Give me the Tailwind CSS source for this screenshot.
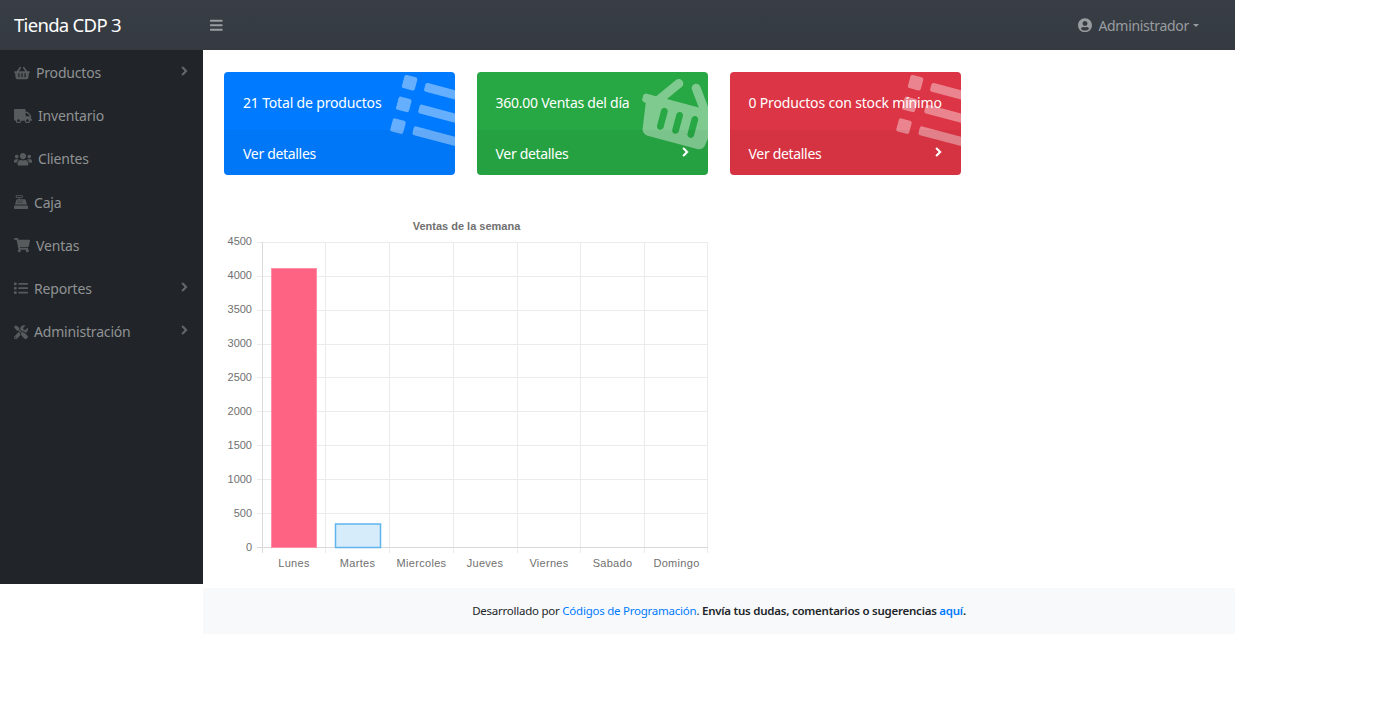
<!DOCTYPE html>
<html lang="es">
<head>
<meta charset="utf-8">
<title>Tienda CDP 3</title>
<script src="https://cdn.jsdelivr.net/npm/@tailwindcss/browser@4"></script>
</head>
<body class="bg-white font-['Noto_Sans',sans-serif] overflow-hidden">
<div class="w-[1235px] h-[705px]">
  <header class="h-[50px] flex items-center bg-gradient-to-b from-[#393e46] to-[#343a40]">
    <div class="w-[203px] pl-[14px] text-[18.5px] tracking-[-0.7px] text-white">Tienda CDP 3</div>
    <svg viewBox="0 0 448 512" class="w-[12.6px] h-[14.4px] ml-[7px] fill-[#999c9f]"><path d="M16 132h416c8.837 0 16-7.163 16-16V76c0-8.837-7.163-16-16-16H16C7.163 60 0 67.163 0 76v40c0 8.837 7.163 16 16 16zm0 160h416c8.837 0 16-7.163 16-16v-40c0-8.837-7.163-16-16-16H16c-8.837 0-16 7.163-16 16v40c0 8.837 7.163 16 16 16zm0 160h416c8.837 0 16-7.163 16-16v-40c0-8.837-7.163-16-16-16H16c-8.837 0-16 7.163-16 16v40c0 8.837 7.163 16 16 16z"/></svg>
    <div class="ml-auto flex items-center mr-[36px] text-[#999c9f] text-[14px] tracking-[-0.3px]">
      <svg viewBox="0 0 496 512" class="w-[14px] h-[14.4px] mr-[6px] fill-[#999c9f]"><path d="M248 8C111 8 0 119 0 256s111 248 248 248 248-111 248-248S385 8 248 8zm0 96c48.6 0 88 39.4 88 88s-39.4 88-88 88-88-39.4-88-88 39.4-88 88-88zm0 344c-58.7 0-111.3-26.6-146.5-68.2 18.8-35.4 55.6-59.8 98.5-59.8 2.4 0 4.8.4 7.1 1.1 13 4.2 26.6 6.9 40.9 6.9 14.3 0 28-2.7 40.9-6.9 2.3-.7 4.7-1.1 7.1-1.1 42.9 0 79.7 24.4 98.5 59.8C359.3 421.4 306.7 448 248 448z"/></svg>
      <span>Administrador</span>
      <span class="ml-[4px] w-0 h-0 border-x-[3.5px] border-x-transparent border-t-[3.5px] border-t-[#999c9f]"></span>
    </div>
  </header>
  <div class="flex items-start">
    <aside class="w-[203px] h-[534px] shrink-0 bg-[#212529] pt-[1px] text-[14px] tracking-[-0.18px] text-[#909294]">
      <a class="h-[43.2px] flex items-center pl-[14px] pr-[14px]">
        <svg viewBox="0 0 576 512" class="w-[16px] h-[14px] mr-[6px] fill-[#585b5e]"><path d="M576 216v16c0 13.255-10.745 24-24 24h-8l-26.113 182.788C514.509 462.435 494.257 480 470.37 480H105.63c-23.887 0-44.139-17.565-47.518-41.212L32 256h-8c-13.255 0-24-10.745-24-24v-16c0-13.255 10.745-24 24-24h67.341l106.78-146.821c10.395-14.292 30.407-17.453 44.701-7.058 14.293 10.395 17.453 30.408 7.058 44.701L170.477 192h235.046L326.12 82.821c-10.395-14.292-7.234-34.306 7.059-44.701 14.291-10.395 34.306-7.235 44.701 7.058L484.659 192H552c13.255 0 24 10.745 24 24zM312 392V280c0-13.255-10.745-24-24-24s-24 10.745-24 24v112c0 13.255 10.745 24 24 24s24-10.745 24-24zm112 0V280c0-13.255-10.745-24-24-24s-24 10.745-24 24v112c0 13.255 10.745 24 24 24s24-10.745 24-24zm-224 0V280c0-13.255-10.745-24-24-24s-24 10.745-24 24v112c0 13.255 10.745 24 24 24s24-10.745 24-24z"/></svg>
        <span>Productos</span>
        <svg viewBox="0 0 320 512" class="ml-auto w-[9px] h-[10px] -mt-[3px] fill-[#63666a] stroke-[#63666a] stroke-[40]"><path d="M285.476 272.971L91.132 467.314c-9.373 9.373-24.569 9.373-33.941 0l-22.667-22.667c-9.357-9.357-9.375-24.522-.04-33.901L188.505 256 34.484 101.255c-9.335-9.379-9.317-24.544.04-33.901l22.667-22.667c9.373-9.373 24.569-9.373 33.941 0L285.475 239.03c9.373 9.372 9.373 24.568.001 33.941z"/></svg>
      </a>
      <a class="h-[43.2px] flex items-center pl-[14px] pr-[14px]">
        <svg viewBox="0 0 640 512" class="w-[18px] h-[14.4px] mr-[6px] fill-[#585b5e]"><path d="M624 352h-16V243.9c0-12.7-5.1-24.9-14.1-33.9L494 110.1c-9-9-21.2-14.1-33.9-14.1H416V48c0-26.5-21.5-48-48-48H48C21.5 0 0 21.5 0 48v320c0 26.5 21.5 48 48 48h16c0 53 43 96 96 96s96-43 96-96h128c0 53 43 96 96 96s96-43 96-96h48c8.8 0 16-7.2 16-16v-32c0-8.8-7.2-16-16-16zM160 464c-26.5 0-48-21.5-48-48s21.5-48 48-48 48 21.5 48 48-21.5 48-48 48zm320 0c-26.5 0-48-21.5-48-48s21.5-48 48-48 48 21.5 48 48-21.5 48-48 48zm80-208H416V144h44.1l99.9 99.9V256z"/></svg>
        <span>Inventario</span>
      </a>
      <a class="h-[43.2px] flex items-center pl-[14px] pr-[14px]">
        <svg viewBox="0 0 640 512" class="w-[18px] h-[14.4px] mr-[6px] fill-[#585b5e]"><path d="M96 224c35.3 0 64-28.7 64-64s-28.7-64-64-64-64 28.7-64 64 28.7 64 64 64zm448 0c35.3 0 64-28.7 64-64s-28.7-64-64-64-64 28.7-64 64 28.7 64 64 64zm32 32h-64c-17.6 0-33.5 7.1-45.1 18.6 40.3 22.1 68.9 62 75.1 109.4h66c17.7 0 32-14.3 32-32v-32c0-35.3-28.7-64-64-64zm-256 0c61.9 0 112-50.1 112-112S381.9 32 320 32 208 82.1 208 144s50.1 112 112 112zm76.8 32h-8.3c-20.8 10-43.9 16-68.5 16s-47.6-6-68.5-16h-8.3C179.6 288 128 339.6 128 403.2V432c0 26.5 21.5 48 48 48h288c26.5 0 48-21.5 48-48v-28.8c0-63.6-51.6-115.2-115.2-115.2zm-223.7-13.4C161.5 263.1 145.6 256 128 256H64c-35.3 0-64 28.7-64 64v32c0 17.7 14.3 32 32 32h65.9c6.3-47.4 34.9-87.3 75.2-109.4z"/></svg>
        <span>Clientes</span>
      </a>
      <a class="h-[43.2px] flex items-center pl-[14px] pr-[14px]">
        <svg viewBox="0 0 512 512" class="w-[14px] h-[14.4px] mr-[6px] fill-[#585b5e]"><path fill-rule="evenodd" d="M80 0h224c9 0 16 7 16 16v64c0 9-7 16-16 16H208v48h176c20 0 36 12 42 30l50 170H36l50-170c5-16 18-27 34-29h56V96H80c-9 0-16-7-16-16V16C64 7 71 0 80 0zm16 32v32h192V32H96zM128 192v32h40v-32h-40zm72 0v32h40v-32h-40zm72 0v32h40v-32h-40zm-144 56v32h40v-32h-40zm72 0v32h40v-32h-40zm72 0v32h40v-32h-40zM32 376h448c18 0 32 14 32 32v72c0 18-14 32-32 32H32c-18 0-32-14-32-32v-72c0-18 14-32 32-32z"/></svg>
        <span>Caja</span>
      </a>
      <a class="h-[43.2px] flex items-center pl-[14px] pr-[14px]">
        <svg viewBox="0 0 576 512" class="w-[16px] h-[14.4px] mr-[6px] fill-[#585b5e]"><path d="M528.12 301.319l47.273-208C578.806 78.301 567.391 64 551.99 64H159.208l-9.166-44.81C147.758 8.021 137.93 0 126.529 0H24C10.745 0 0 10.745 0 24v16c0 13.255 10.745 24 24 24h69.883l70.248 343.435C147.325 417.1 136 435.222 136 456c0 30.928 25.072 56 56 56s56-25.072 56-56c0-15.674-6.447-29.835-16.824-40h209.647C430.447 426.165 424 440.326 424 456c0 30.928 25.072 56 56 56s56-25.072 56-56c0-22.172-12.888-41.332-31.579-50.405l5.517-24.276c3.413-15.018-8.002-29.319-23.403-29.319H218.117l-6.545-32h293.145c11.206 0 20.92-7.754 23.403-18.681z"/></svg>
        <span>Ventas</span>
      </a>
      <a class="h-[43.2px] flex items-center pl-[14px] pr-[14px]">
        <svg viewBox="0 0 512 512" class="w-[14px] h-[14.4px] mr-[6px] fill-[#585b5e]"><path d="M80 368H16a16 16 0 0 0-16 16v64a16 16 0 0 0 16 16h64a16 16 0 0 0 16-16v-64a16 16 0 0 0-16-16zm0-320H16A16 16 0 0 0 0 64v64a16 16 0 0 0 16 16h64a16 16 0 0 0 16-16V64a16 16 0 0 0-16-16zm0 160H16a16 16 0 0 0-16 16v64a16 16 0 0 0 16 16h64a16 16 0 0 0 16-16v-64a16 16 0 0 0-16-16zm416 176H176a16 16 0 0 0-16 16v32a16 16 0 0 0 16 16h320a16 16 0 0 0 16-16v-32a16 16 0 0 0-16-16zm0-320H176a16 16 0 0 0-16 16v32a16 16 0 0 0 16 16h320a16 16 0 0 0 16-16V80a16 16 0 0 0-16-16zm0 160H176a16 16 0 0 0-16 16v32a16 16 0 0 0 16 16h320a16 16 0 0 0 16-16v-32a16 16 0 0 0-16-16z"/></svg>
        <span>Reportes</span>
        <svg viewBox="0 0 320 512" class="ml-auto w-[9px] h-[10px] -mt-[3px] fill-[#63666a] stroke-[#63666a] stroke-[40]"><path d="M285.476 272.971L91.132 467.314c-9.373 9.373-24.569 9.373-33.941 0l-22.667-22.667c-9.357-9.357-9.375-24.522-.04-33.901L188.505 256 34.484 101.255c-9.335-9.379-9.317-24.544.04-33.901l22.667-22.667c9.373-9.373 24.569-9.373 33.941 0L285.475 239.03c9.373 9.372 9.373 24.568.001 33.941z"/></svg>
      </a>
      <a class="h-[43.2px] flex items-center pl-[14px] pr-[14px]">
        <svg viewBox="0 0 512 512" class="w-[14px] h-[14.4px] mr-[6px] fill-[#585b5e]"><path d="M501.1 395.7L384 278.6c-23.1-23.1-57.6-27.6-85.4-13.9L192 158.1V96L64 0 0 64l96 128h62.1l106.6 106.6c-13.6 27.8-9.2 62.3 13.9 85.4l117.1 117.1c14.6 14.6 38.2 14.6 52.7 0l52.7-52.7c14.5-14.6 14.5-38.2-.1-52.7zM331.7 225c28.3 0 54.9 11 74.9 31l19.4 19.4c15.8-6.9 30.8-16.5 43.8-29.5 37.1-37.1 49.7-89.3 37.9-136.7-2.2-9-13.5-12.1-20.1-5.5l-74.4 74.4-67.9-11.3L334 98.9l74.4-74.4c6.6-6.6 3.4-17.9-5.7-20.2-47.4-11.7-99.6.9-136.6 37.9-28.5 28.5-41.9 66.1-41.2 103.6l82.1 82.1c8.1-1.9 16.5-2.9 24.7-2.9zm-103.9 82l-56.7-56.7L18.7 402.8c-25 25-25 65.5 0 90.5s65.5 25 90.5 0l123.6-123.6c-7.6-19.9-9.9-41.6-5-62.7zM64 472c-13.2 0-24-10.8-24-24 0-13.3 10.7-24 24-24s24 10.7 24 24c0 13.2-10.7 24-24 24z"/></svg>
        <span>Administración</span>
        <svg viewBox="0 0 320 512" class="ml-auto w-[9px] h-[10px] -mt-[3px] fill-[#63666a] stroke-[#63666a] stroke-[40]"><path d="M285.476 272.971L91.132 467.314c-9.373 9.373-24.569 9.373-33.941 0l-22.667-22.667c-9.357-9.357-9.375-24.522-.04-33.901L188.505 256 34.484 101.255c-9.335-9.379-9.317-24.544.04-33.901l22.667-22.667c9.373-9.373 24.569-9.373 33.941 0L285.475 239.03c9.373 9.372 9.373 24.568.001 33.941z"/></svg>
      </a>
    </aside>
    <div class="flex-1 flex flex-col">
      <main class="h-[538px] pt-[22px] pl-[21px]">
        <div class="flex gap-[22px] text-[14px] tracking-[-0.17px] text-white">
          <div class="relative w-[231px] h-[103px] rounded-[4px] overflow-hidden bg-[#007bff]">
            <svg viewBox="0 0 512 512" class="absolute left-[172px] top-[3.6px] w-[72px] h-[72px] rotate-[15deg] fill-white/40"><path d="M80 368H16a16 16 0 0 0-16 16v64a16 16 0 0 0 16 16h64a16 16 0 0 0 16-16v-64a16 16 0 0 0-16-16zm0-320H16A16 16 0 0 0 0 64v64a16 16 0 0 0 16 16h64a16 16 0 0 0 16-16V64a16 16 0 0 0-16-16zm0 160H16a16 16 0 0 0-16 16v64a16 16 0 0 0 16 16h64a16 16 0 0 0 16-16v-64a16 16 0 0 0-16-16zm416 176H176a16 16 0 0 0-16 16v32a16 16 0 0 0 16 16h320a16 16 0 0 0 16-16v-32a16 16 0 0 0-16-16zm0-320H176a16 16 0 0 0-16 16v32a16 16 0 0 0 16 16h320a16 16 0 0 0 16-16V80a16 16 0 0 0-16-16zm0 160H176a16 16 0 0 0-16 16v32a16 16 0 0 0 16 16h320a16 16 0 0 0 16-16v-32a16 16 0 0 0-16-16z"/></svg>
            <div class="relative h-[58px] pl-[19px] pt-[20px] leading-[21px]">21 Total de productos</div>
            <div class="relative h-[45px] pl-[19px] pt-[13px] leading-[21px] tracking-[-0.32px] bg-black/3">Ver detalles</div>
          </div>
          <div class="relative w-[231px] h-[103px] rounded-[4px] overflow-hidden bg-[#28a745]">
            <svg viewBox="0 0 576 512" class="absolute left-[163px] top-[4px] w-[81px] h-[72px] rotate-[15deg] fill-white/40"><path d="M576 216v16c0 13.255-10.745 24-24 24h-8l-26.113 182.788C514.509 462.435 494.257 480 470.37 480H105.63c-23.887 0-44.139-17.565-47.518-41.212L32 256h-8c-13.255 0-24-10.745-24-24v-16c0-13.255 10.745-24 24-24h67.341l106.78-146.821c10.395-14.292 30.407-17.453 44.701-7.058 14.293 10.395 17.453 30.408 7.058 44.701L170.477 192h235.046L326.12 82.821c-10.395-14.292-7.234-34.306 7.059-44.701 14.291-10.395 34.306-7.235 44.701 7.058L484.659 192H552c13.255 0 24 10.745 24 24zM312 392V280c0-13.255-10.745-24-24-24s-24 10.745-24 24v112c0 13.255 10.745 24 24 24s24-10.745 24-24zm112 0V280c0-13.255-10.745-24-24-24s-24 10.745-24 24v112c0 13.255 10.745 24 24 24s24-10.745 24-24zm-224 0V280c0-13.255-10.745-24-24-24s-24 10.745-24 24v112c0 13.255 10.745 24 24 24s24-10.745 24-24z"/></svg>
            <div class="relative h-[58px] pl-[18.5px] pt-[20px] leading-[21px] tracking-[-0.25px]">360.00 Ventas del día</div>
            <div class="relative h-[45px] pl-[18.5px] pr-[18px] pt-[13px] leading-[21px] bg-black/3 flex justify-between"><span class="tracking-[-0.32px]">Ver detalles</span><svg viewBox="0 0 320 512" class="w-[9px] h-[10px] mt-[4px] fill-white stroke-white stroke-[40]"><path d="M285.476 272.971L91.132 467.314c-9.373 9.373-24.569 9.373-33.941 0l-22.667-22.667c-9.357-9.357-9.375-24.522-.04-33.901L188.505 256 34.484 101.255c-9.335-9.379-9.317-24.544.04-33.901l22.667-22.667c9.373-9.373 24.569-9.373 33.941 0L285.475 239.03c9.373 9.372 9.373 24.568.001 33.941z"/></svg></div>
          </div>
          <div class="relative w-[231px] h-[103px] rounded-[4px] overflow-hidden bg-[#dc3545]">
            <svg viewBox="0 0 512 512" class="absolute left-[171.5px] top-[3.6px] w-[72px] h-[72px] rotate-[15deg] fill-white/40"><path d="M80 368H16a16 16 0 0 0-16 16v64a16 16 0 0 0 16 16h64a16 16 0 0 0 16-16v-64a16 16 0 0 0-16-16zm0-320H16A16 16 0 0 0 0 64v64a16 16 0 0 0 16 16h64a16 16 0 0 0 16-16V64a16 16 0 0 0-16-16zm0 160H16a16 16 0 0 0-16 16v64a16 16 0 0 0 16 16h64a16 16 0 0 0 16-16v-64a16 16 0 0 0-16-16zm416 176H176a16 16 0 0 0-16 16v32a16 16 0 0 0 16 16h320a16 16 0 0 0 16-16v-32a16 16 0 0 0-16-16zm0-320H176a16 16 0 0 0-16 16v32a16 16 0 0 0 16 16h320a16 16 0 0 0 16-16V80a16 16 0 0 0-16-16zm0 160H176a16 16 0 0 0-16 16v32a16 16 0 0 0 16 16h320a16 16 0 0 0 16-16v-32a16 16 0 0 0-16-16z"/></svg>
            <div class="relative h-[58px] pl-[18.5px] pt-[20px] leading-[21px] whitespace-nowrap">0 Productos con stock mínimo</div>
            <div class="relative h-[45px] pl-[18.5px] pr-[18px] pt-[13px] leading-[21px] bg-black/3 flex justify-between"><span class="tracking-[-0.32px]">Ver detalles</span><svg viewBox="0 0 320 512" class="w-[9px] h-[10px] mt-[4px] fill-white stroke-white stroke-[40]"><path d="M285.476 272.971L91.132 467.314c-9.373 9.373-24.569 9.373-33.941 0l-22.667-22.667c-9.357-9.357-9.375-24.522-.04-33.901L188.505 256 34.484 101.255c-9.335-9.379-9.317-24.544.04-33.901l22.667-22.667c9.373-9.373 24.569-9.373 33.941 0L285.475 239.03c9.373 9.372 9.373 24.568.001 33.941z"/></svg></div>
          </div>
        </div>
        <svg viewBox="0 0 490 365" class="block w-[490px] h-[365px] mt-[39px] font-['Liberation_Sans',sans-serif] text-[11px] fill-[#707070]">
          <text x="242.5" y="16" text-anchor="middle" class="font-bold text-[11px]">Ventas de la semana</text>
          <g class="stroke-[#ebebeb]" stroke-width="1">
            <path d="M33 28.5H484M33 62.5H484M33 96.5H484M33 130.5H484M33 163.5H484M33 197.5H484M33 231.5H484M33 265.5H484M33 299.5H484"/>
            <path d="M101.5 28V339M165.5 28V339M229.5 28V339M293.5 28V339M356.5 28V339M420.5 28V339M483.5 28V339"/>
            <path class="stroke-[#d9d9d9]" d="M38.5 28V339M33 333.5H484"/>
          </g>
          <rect x="47.5" y="54.5" width="45" height="279" class="fill-[#ff6384] stroke-[#ff8fa6]"/>
          <rect x="111.5" y="310" width="45" height="23.5" stroke-width="1.5" class="fill-[#d7ecfb] stroke-[#5fb4ec]"/>
          <g text-anchor="end">
            <text x="28" y="31">4500</text><text x="28" y="65">4000</text><text x="28" y="99">3500</text><text x="28" y="133">3000</text><text x="28" y="167">2500</text><text x="28" y="201">2000</text><text x="28" y="235">1500</text><text x="28" y="269">1000</text><text x="28" y="303">500</text><text x="28" y="337">0</text>
          </g>
          <g text-anchor="middle" class="tracking-[0.3px]">
            <text x="70" y="353">Lunes</text><text x="133.5" y="353">Martes</text><text x="197.5" y="353">Miercoles</text><text x="261" y="353">Jueves</text><text x="325" y="353">Viernes</text><text x="388.5" y="353">Sabado</text><text x="452.5" y="353">Domingo</text>
          </g>
        </svg>
      </main>
      <footer class="h-[46px] bg-[#f8f9fa] flex items-center justify-center text-[11.5px] tracking-[-0.24px] text-[#212529]">
        <span>Desarrollado por <a class="text-[#007bff]">Códigos de Programación</a>. <b class="font-semibold">Envía tus dudas, comentarios o sugerencias <a class="text-[#007bff]">aquí</a>.</b></span>
      </footer>
    </div>
  </div>
</div>
</body>
</html>
